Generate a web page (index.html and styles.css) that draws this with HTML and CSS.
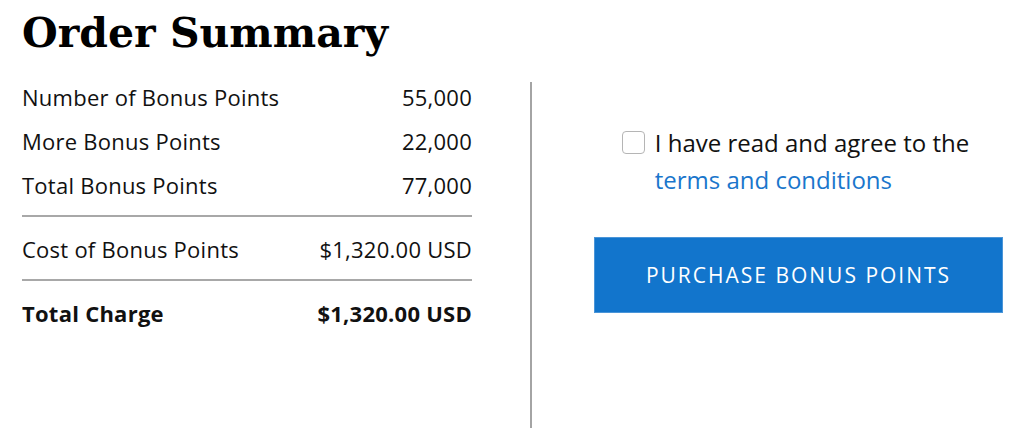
FILE: index.html
```html
<!DOCTYPE html>
<html lang="en">
<head>
<meta charset="utf-8">
<title>Order Summary</title>
<link rel="stylesheet" href="styles.css">
</head>
<body>
<div class="page">
  <h1 class="title">Order Summary</h1>
  <div class="content">
    <div class="summary">
      <div class="row"><span>Number of Bonus Points</span><span>55,000</span></div>
      <div class="row"><span>More Bonus Points</span><span>22,000</span></div>
      <div class="row"><span>Total Bonus Points</span><span>77,000</span></div>
      <div class="rule"></div>
      <div class="row row-cost"><span>Cost of Bonus Points</span><span>$1,320.00 USD</span></div>
      <div class="rule"></div>
      <div class="row row-total"><span>Total Charge</span><span>$1,320.00 USD</span></div>
    </div>
    <div class="divider"></div>
    <div class="actions">
      <label class="agree">
        <span class="box"></span>
        <span class="agree-text">I have read and agree to the<br><a href="#" class="link">terms and conditions</a></span>
      </label>
      <button class="buy" type="button">PURCHASE BONUS POINTS</button>
    </div>
  </div>
</div>
</body>
</html>
```

FILE: styles.css
```css
html, body {
  margin: 0;
  padding: 0;
  background: #ffffff;
}

body {
  font-family: "Open Sans", "Liberation Sans", sans-serif;
  color: #111111;
}

.page {
  padding: 0 21px 0 22px;
}

.title {
  margin: 0;
  padding-top: 8px;
  height: 74px;
  box-sizing: border-box;
  font-family: "DejaVu Serif", "Liberation Serif", serif;
  font-weight: 700;
  font-size: 41px;
  line-height: 50px;
  color: #000000;
}

.content {
  display: flex;
  align-items: flex-start;
  padding-top: 8px;
}

.summary {
  width: 450px;
  display: flex;
  flex-direction: column;
  gap: 16px;
  padding-top: 1px;
}

.row {
  display: flex;
  justify-content: space-between;
  font-size: 22px;
  letter-spacing: 0.25px;
  line-height: 28px;
}

.row-total {
  font-weight: 700;
}

.rule {
  height: 2px;
  background: #a8a8a8;
  margin: 0 0 2px;
}

.divider {
  width: 2px;
  height: 346px;
  background: #a4a4a4;
  margin-left: 58px;
}

.actions {
  flex: 1;
  margin-left: 62px;
  display: flex;
  flex-direction: column;
  align-items: center;
  padding-top: 42px;
}

.agree {
  display: flex;
  align-items: flex-start;
  gap: 10px;
  margin-right: 6px;
  font-size: 24px;
  line-height: 37px;
  color: #111111;
  cursor: pointer;
}

.box {
  width: 21px;
  height: 21px;
  margin-top: 7px;
  border: 1px solid #b5b5b5;
  border-radius: 4px;
  background: #ffffff;
  flex: none;
}

.link {
  color: #1a76cc;
  text-decoration: none;
}

.buy {
  margin-top: 39px;
  width: 100%;
  height: 76px;
  border: 1px solid #4a95d8;
  background: #1275cc;
  color: #ffffff;
  font-family: "Open Sans", "Liberation Sans", sans-serif;
  font-size: 21px;
  letter-spacing: 2px;
  cursor: pointer;
}
```
